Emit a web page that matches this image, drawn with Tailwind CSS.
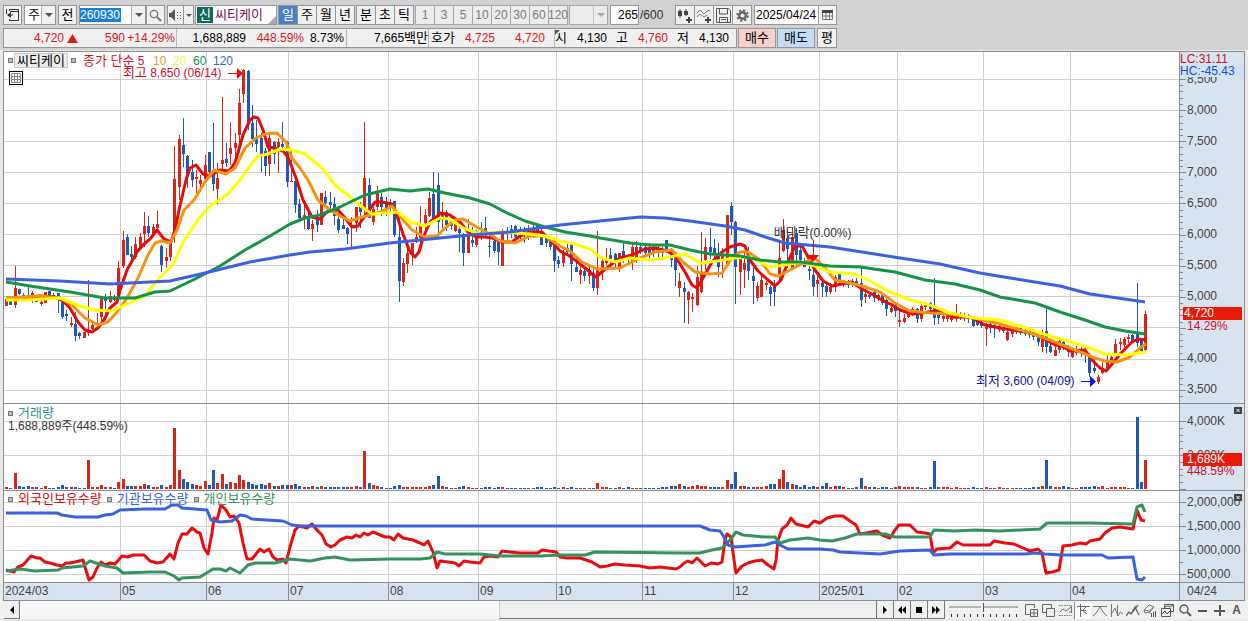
<!DOCTYPE html>
<html lang="ko">
<head>
  <meta charset="UTF-8" />
  <meta name="viewport" content="width=device-width, initial-scale=1.0" />
  <title>씨티케이 260930</title>
  <script src="https://cdn.jsdelivr.net/npm/@tailwindcss/browser@4"></script>
</head>
<body class="bg-[#e9e9e9] font-['Liberation_Sans','Noto_Sans_CJK_KR',sans-serif] text-[12px] leading-[14px] text-black">
  <div class="flex min-h-screen flex-col">

    <header class="bg-[#d1d1d1] px-[3px] pt-[5px] pb-[2px]">
      <!-- Toolbar -->
      <div class="flex h-5 items-stretch whitespace-nowrap">
        <button type="button" aria-label="패널" class="flex w-[19px] shrink-0 items-center justify-center border border-[#969696] bg-[#f0f0f0]">
          <svg class="h-[14px] w-[15px]" viewBox="0 0 15 14" fill="none" stroke="#333"><path d="M4.5 3V1.5h9v11h-9V11M5 3.5h9M1.5 1v5" /><path d="M2 7l4-3v6z" fill="#333" stroke="none" /><path d="M5 7h3" /></svg>
        </button>
        <div class="relative ml-[2px] w-8 shrink-0">
          <select aria-label="종목구분" class="h-5 w-full appearance-none border border-[#969696] bg-white pl-[3px] text-[13px]"><option>주</option></select>
          <div class="pointer-events-none absolute inset-y-px right-px flex w-[14px] items-center justify-center border-l border-[#b0b0b0] bg-[#f0f0f0]">
            <svg class="h-1 w-2" viewBox="0 0 8 4"><path d="M0 0h8L4 4z" fill="#555" /></svg>
          </div>
        </div>
        <button type="button" class="ml-[2px] w-[19px] shrink-0 border border-[#969696] bg-[#f0f0f0] text-[13px]">전</button>
        <div class="ml-[2px] flex w-[67px] shrink-0 items-center border border-[#969696] bg-white">
          <input type="text" aria-label="종목코드" value="260930" class="h-[14px] w-[41px] shrink-0 bg-[#1b7fd3] text-white outline-none" />
          <button type="button" aria-label="종목 목록" class="ml-auto flex h-full w-[14px] items-center justify-center border-l border-[#b0b0b0] bg-[#f0f0f0]">
            <svg class="h-1 w-2" viewBox="0 0 8 4"><path d="M0 0h8L4 4z" fill="#555" /></svg>
          </button>
        </div>
        <button type="button" aria-label="검색" class="flex w-[19px] shrink-0 items-center justify-center border border-[#969696] bg-[#f0f0f0]">
          <svg class="h-[13px] w-[13px]" viewBox="0 0 13 13" fill="none" stroke="#777"><circle cx="5" cy="5" r="3.7" stroke-width="1.3" /><path d="M8 8l4 4" stroke-width="2" /></svg>
        </button>
        <button type="button" aria-label="음성" class="ml-[2px] flex w-[17px] shrink-0 items-center justify-center border border-[#969696] bg-[#f0f0f0]">
          <svg class="h-3 w-[13px]" viewBox="0 0 13 12" fill="#555"><path d="M0 4h2l4-4v12L2 8H0z" /><path d="M8 3h1v1H8zM8 6h1v1H8zM8 9h1v1H8zM11 3h1v1h-1zM11 6h1v1h-1zM11 9h1v1h-1z" /></svg>
        </button>
        <button type="button" aria-label="음성 설정" class="flex w-[10px] shrink-0 items-center justify-center border border-l-0 border-[#969696] bg-[#f0f0f0]">
          <svg class="h-[3px] w-[6px]" viewBox="0 0 6 3"><path d="M0 0h6L3 3z" fill="#555" /></svg>
        </button>
        <div class="relative ml-px flex w-[82px] shrink-0 items-center border border-[#969696] bg-white text-[13px]">
          <span class="ml-px flex h-4 w-4 items-center justify-center bg-[#0c6b5c] text-white">신</span>
          <span class="ml-[2px] text-[#7a0a5a]">씨티케이</span>
          <svg class="absolute right-0 bottom-0 h-2 w-2" viewBox="0 0 8 8"><path d="M8 0v8H0z" fill="#aaa" /></svg>
        </div>
        <div class="ml-px flex shrink-0 border-y border-l border-[#969696] text-[13px]">
          <button type="button" class="w-[19px] border-r border-[#969696] bg-[#4a80cc] text-white">일</button>
          <button type="button" class="w-[19px] border-r border-[#969696] bg-[#f0f0f0]">주</button>
          <button type="button" class="w-[19px] border-r border-[#969696] bg-[#f0f0f0]">월</button>
          <button type="button" class="w-[19px] border-r border-[#969696] bg-[#f0f0f0]">년</button>
        </div>
        <div class="ml-px flex shrink-0 border-y border-l border-[#969696] text-[13px]">
          <button type="button" class="w-[19px] border-r border-[#969696] bg-[#f0f0f0]">분</button>
          <button type="button" class="w-[19px] border-r border-[#969696] bg-[#f0f0f0]">초</button>
          <button type="button" class="w-[19px] border-r border-[#969696] bg-[#f0f0f0]">틱</button>
        </div>
        <div class="ml-px flex shrink-0 border-y border-l border-[#a8a8a8] text-[#7c7c7c]">
          <button type="button" class="w-[19px] border-r border-[#a8a8a8] bg-[#ececec]">1</button>
          <button type="button" class="w-[19px] border-r border-[#a8a8a8] bg-[#ececec]">3</button>
          <button type="button" class="w-[19px] border-r border-[#a8a8a8] bg-[#ececec]">5</button>
          <button type="button" class="w-[19px] border-r border-[#a8a8a8] bg-[#ececec]">10</button>
          <button type="button" class="w-[19px] border-r border-[#a8a8a8] bg-[#ececec]">20</button>
          <button type="button" class="w-[19px] border-r border-[#a8a8a8] bg-[#ececec]">30</button>
          <button type="button" class="w-[19px] border-r border-[#a8a8a8] bg-[#ececec]">60</button>
          <button type="button" class="flex w-[19px] items-center justify-center border-r border-[#a8a8a8] bg-[#ececec]">120</button>
        </div>
        <div class="relative ml-px w-[39px] shrink-0">
          <select aria-label="분 주기" disabled class="h-5 w-full appearance-none border border-[#a8a8a8] bg-[#ececec]"><option></option></select>
          <div class="pointer-events-none absolute inset-y-px right-px flex w-[14px] items-center justify-center border-l border-[#c4c4c4]">
            <svg class="h-1 w-2" viewBox="0 0 8 4"><path d="M0 0h8L4 4z" fill="#aaa" /></svg>
          </div>
        </div>
        <input type="text" id="bar-count" value="265" class="ml-[2px] w-[29px] shrink-0 border border-[#969696] bg-white text-right outline-none" />
        <label for="bar-count" class="ml-px w-[35px] shrink-0 self-center text-[#333]">/600</label>
        <div class="flex shrink-0 border-y border-l border-[#969696]">
          <button type="button" aria-label="차트 유형" class="flex w-[19px] items-center justify-center border-r border-[#969696] bg-[#f0f0f0]">
            <svg class="h-[15px] w-4" viewBox="0 0 16 15" fill="#444"><path d="M1 3h4v5H1zM2.5 1h1v9h-1zM7 3h4v4H7zM8.500 1h1v7h-1zM11 9h2v2h2v2h-2v2h-2v-2H9v-2h2z" /></svg>
          </button>
          <button type="button" aria-label="지표 추가" class="flex w-[19px] items-center justify-center border-r border-[#969696] bg-[#f0f0f0]">
            <svg class="h-[15px] w-4" viewBox="0 0 16 15" fill="none" stroke="#777"><path d="M1 5l3-3 4 4 3-3 3-1M1 9l3-3 4 3 3-2" /><path d="M11 9h2v2h2v2h-2v2h-2v-2H9v-2h2z" fill="#444" stroke="none" /></svg>
          </button>
          <button type="button" aria-label="저장" class="flex w-[19px] items-center justify-center border-r border-[#969696] bg-[#f0f0f0]">
            <svg class="h-[15px] w-[15px]" viewBox="0 0 15 15" fill="none" stroke="#555"><path d="M.5.5h12l2 2v12H.5zM3.5 1v5h8V1M3.500 14V9.500h8V14M5 11.500h5" /></svg>
          </button>
          <button type="button" aria-label="설정" class="flex w-[19px] items-center justify-center border-r border-[#969696] bg-[#f0f0f0]">
            <svg class="h-[13px] w-[13px]" viewBox="0 0 13 13" fill="none" stroke="#666"><circle cx="6.5" cy="6.5" r="3.3" stroke-width="2.4" /><circle cx="6.5" cy="6.5" r="5.3" stroke-width="2" stroke-dasharray="2.1 2.06" /></svg>
          </button>
        </div>
        <input type="text" aria-label="기준일" value="2025/04/24" class="ml-[2px] w-[65px] shrink-0 border border-[#969696] bg-white pl-px outline-none" />
        <button type="button" aria-label="달력" class="flex w-[18px] shrink-0 items-center justify-center border border-l-0 border-[#969696] bg-[#f4f4f4]">
          <svg class="h-[10px] w-[11px]" viewBox="0 0 11 10" fill="none" stroke="#777"><path d="M.5.5h10v9H.5zM4 3v7M7.5 3v7M1 6h10" /><path d="M0 0h11v3H0z" fill="#444" stroke="none" /></svg>
        </button>
      </div>

      <!-- Quote line -->
      <div class="mt-[3px] flex h-5 items-stretch whitespace-nowrap">
        <div class="flex h-5 w-[734px] shrink-0 border border-[#969696] bg-[#f0f0f0]">
          <div class="flex w-[173px] items-center border-r border-[#b8b8b8] text-[#d0221c]">
            <span class="w-[60px] text-right">4,720</span>
            <svg class="ml-[3px] h-[10px] w-[11px]" viewBox="0 0 11 10"><path d="M5.5 1L11 10H0z" fill="#d9200f" /></svg>
            <span class="w-[47px] text-right">590</span>
            <span class="w-[50px] text-right">+14.29%</span>
          </div>
          <div class="flex w-[170px] items-center border-r border-[#b8b8b8]">
            <span class="w-[69px] text-right">1,688,889</span>
            <span class="w-[58px] text-right text-[#d0221c]">448.59%</span>
            <span class="w-[40px] text-right">8.73%</span>
          </div>
          <div class="flex w-[82px] items-center justify-end border-r border-[#b8b8b8]">7,665<span class="text-[13px]">백만</span></div>
          <div class="flex w-[126px] items-center border-r border-[#b8b8b8]">
            <span class="ml-[2px] w-[24px] text-[13px]">호가</span>
            <span class="w-[40px] text-right text-[#d0221c]">4,725</span>
            <span class="w-[50px] text-right text-[#d0221c]">4,720</span>
          </div>
          <div class="relative flex items-center">
            <svg class="absolute top-px left-0 h-[5px] w-[5px]" viewBox="0 0 5 5"><path d="M0 0h5L0 5z" fill="#555" /></svg>
            <span class="w-[12px] text-[13px]">시</span>
            <span class="w-[40px] text-right">4,130</span>
            <span class="ml-[9px] w-[12px] text-[13px]">고</span>
            <span class="w-[40px] text-right text-[#d0221c]">4,760</span>
            <span class="ml-[9px] w-[12px] text-[13px]">저</span>
            <span class="w-[40px] text-right">4,130</span>
          </div>
        </div>
        <button type="button" class="ml-px w-[38px] shrink-0 border border-[#969696] bg-[#f8cfcb] text-[13px]">매수</button>
        <button type="button" class="ml-px w-[38px] shrink-0 border border-[#969696] bg-[#c3dcf6] text-[13px]">매도</button>
        <button type="button" class="ml-[2px] w-5 shrink-0 border border-[#969696] bg-[#f0f0f0] text-[13px]">평</button>
      </div>
    </header>

    <!-- Chart -->
    <main class="mx-[3px] mt-px border border-b-0 border-[#8c8c8c] bg-white">

      <!-- Price pane -->
      <section class="flex h-[352px] border-b border-[#8c8c8c]">
        <div class="relative min-w-0 flex-1 overflow-hidden">
          <svg class="absolute inset-0 h-full w-full" viewBox="4 52 1175 351" preserveAspectRatio="none" fill="none">
            <path stroke="#cfcfcf" d="M4 79.5H1179M4 110.5H1179M4 141.5H1179M4 172.5H1179M4 203.5H1179M4 234.5H1179M4 265.5H1179M4 296.5H1179M4 327.5H1179M4 359.5H1179M4 390.5H1179" />
            <path class="months" stroke="#cfcfcf" />
            <g id="candles" shape-rendering="crispEdges"></g>
            <g stroke-width="3" stroke-linejoin="round">
              <polyline stroke="#e30b0b" points="6,298 20,298 40,296 55,297 63,301 70,308 78,322 85,330 92,332 98,328 104,320 110,308 117,302 120,290 127,270 137,252 143,245 150,239 157,230 164,239 171,242 175,230 179,210 186,180 190,168 196,165 203,174 210,176 220,170 229,171 235,163 243,135 250,120 254,117 258,118 263,130 268,147 275,148 283,151 288,157 296,178 303,200 312,217 320,219 328,211 338,210 345,218 352,227 358,226 367,213 375,202 382,202 392,204 396,213 403,234 410,252 415,257 419,252 423,238 430,222 441,213 450,215 460,222 468,232 476,237 485,237 492,238 501,242 512,242 520,236 530,232 542,232 550,240 560,251 568,255 575,260 585,268 596,277 603,271 612,264 620,258 632,255 645,249 655,248 667,251 675,256 685,272 692,285 697,288 703,278 712,262 722,252 730,247 740,244 745,246 750,260 758,271 768,280 775,286 781,280 788,262 795,246 802,246 807,255 815,270 823,281 832,286 842,284 852,282 862,289 870,293 882,300 892,305 900,310 912,314 922,313 940,310 952,317 970,317 985,325 1000,328 1020,331 1035,334 1046,340 1055,345 1062,346 1070,351 1085,350 1092,360 1100,368 1106,371 1112,364 1122,352 1132,342 1138,339 1146,340" />
              <polyline stroke="#f5930f" points="6,298 40,296 60,298 72,305 85,318 98,325 108,322 117,312 127,298 138,278 148,255 155,243 161,241 170,243 177,230 184,210 194,200 205,182 214,170 226,174 235,168 245,148 256,138 265,134 277,133 286,142 292,158 300,168 308,180 318,200 330,210 340,216 350,221 362,217 375,214 385,210 392,206 397,212 405,222 412,230 425,237 437,236 445,228 455,220 463,219 475,226 490,234 500,241 515,243 530,236 545,236 560,246 570,251 582,262 597,269 620,268 640,258 655,252 672,250 683,262 695,272 710,274 722,273 732,258 740,252 748,252 760,260 770,274 778,276 790,270 805,262 815,258 825,268 835,280 855,284 862,286 880,292 895,303 910,311 930,313 950,314 975,318 1000,324 1030,333 1050,340 1065,346 1080,352 1095,358 1105,361 1117,362 1130,357 1140,348 1146,344" />
              <polyline stroke="#ffff00" points="6,300 30,300 60,298 80,306 95,310 112,311 125,305 145,296 160,277 173,265 183,242 200,217 210,206 228,194 240,180 252,163 258,156 268,154 280,149 292,150 305,154 322,168 335,185 350,197 362,207 372,214 385,213 398,212 410,222 425,226 440,218 450,219 463,228 480,234 500,232 530,234 545,236 560,241 575,244 590,249 600,257 615,262 630,258 650,260 670,257 685,254 700,263 718,261 735,258 750,257 770,267 785,265 800,262 815,266 830,272 855,274 870,281 890,292 910,300 930,305 950,313 975,318 1000,320 1020,326 1050,336 1075,343 1090,348 1105,354 1125,355 1146,352" />
              <polyline stroke="#159447" points="6,282 30,286 70,292 105,298 135,298 155,292 170,291 195,279 220,266 245,250 270,236 290,224 305,218 320,215 340,207 365,195 390,189 410,191 428,189 445,193 470,198 490,204 505,212 525,221 545,227 565,232 590,236 600,238 630,243 650,245 670,245 690,250 710,254 740,256 760,260 780,262 800,262 830,266 860,267 895,272 925,280 955,284 980,290 1000,297 1035,303 1060,312 1085,320 1105,327 1125,331 1145,334" />
              <polyline stroke="#3a62e0" points="6,279 60,281 110,284 170,281 205,273 250,262 290,255 310,252 345,249 390,243 430,239 470,235 510,232 560,225 600,221 640,217 665,218 690,221 725,226 745,230 765,237 785,243 830,247 862,252 900,258 940,264 980,273 1010,278 1060,286 1090,294 1145,302" />
            </g>
            <path d="M813.5 240V257" stroke="#b01a1a" />
            <path d="M807 255h12l-6 7z" fill="#e80c0c" />
          </svg>
          <div class="relative flex h-[16px] items-center pl-1 pt-px whitespace-nowrap">
            <span class="h-[5px] w-[5px] border border-[#777] bg-[#bbb]"></span>
            <button type="button" class="ml-px flex h-[15px] w-[54px] items-center justify-center border border-[#c8c8c8] bg-[#ececec] text-[13px] leading-[13px]">씨티케이</button>
            <span class="ml-[3px] h-[5px] w-[5px] border border-[#777] bg-[#bbb]"></span>
            <span class="ml-[7px] w-[70px] text-[#d01020]"><span class="text-[13px]">종가 단순</span> 5</span>
            <span class="w-5 text-[#d9a21b]">10</span>
            <span class="w-5 text-[#f5f03a]">20</span>
            <span class="w-5 text-[#159447]">60</span>
            <span class="text-[#3a62c8]">120</span>
          </div>
          <button type="button" aria-label="데이터 표" class="absolute top-[19px] left-[5px] flex h-[14px] w-[14px] items-center justify-center border border-black bg-white">
            <svg class="h-[10px] w-[10px]" viewBox="0 0 10 10" fill="none" stroke="#888"><path d="M.5.5h9v9h-9zM3.5 0v10M6.5 0v10M0 3.5h10M0 6.5h10" /></svg>
          </button>
          <div class="absolute top-[14px] right-[79.7%] flex items-center gap-[6px] whitespace-nowrap text-[#c8102e]">
            <span><span class="text-[13px]">최고</span> 8,650 (06/14)</span>
            <svg class="h-[13px] w-[15px]" viewBox="0 0 15 13"><path d="M0 6h9V1l6 5.5L9 12V7H0z" fill="#e80c0c" /></svg>
          </div>
          <div class="absolute top-[174px] left-[65.5%] whitespace-nowrap text-[#333]"><span class="text-[13px]">배당락</span>(0.00%)</div>
          <div class="absolute top-[322px] right-[7.1%] flex items-center gap-[6px] whitespace-nowrap text-[#10109a]">
            <span><span class="text-[13px]">최저</span> 3,600 (04/09)</span>
            <svg class="h-[13px] w-[15px]" viewBox="0 0 15 13"><path d="M0 6h9V1l6 5.5L9 12V7H0z" fill="#0c0ce8" /></svg>
          </div>
        </div>
        <div class="relative w-[65px] shrink-0 overflow-hidden border-l border-[#8c8c8c] bg-[#d8e3f0] text-[#444]">
          <svg class="absolute inset-0 h-[351px] w-2" viewBox="0 52 8 351" fill="none" stroke="#888"><path id="price-ticks" /></svg>
          <ul class="pt-[12px] pl-[7px] leading-[31px]">
            <li class="h-[31px]">8,500</li>
            <li class="h-[31px]">8,000</li>
            <li class="h-[31px]">7,500</li>
            <li class="h-[31px]">7,000</li>
            <li class="h-[31px]">6,500</li>
            <li class="h-[31px]">6,000</li>
            <li class="h-[31px]">5,500</li>
            <li class="h-[31px]">5,000</li>
            <li class="h-[31px]"></li>
            <li class="h-[31px]">4,000</li>
            <li class="h-[31px]">3,500</li>
          </ul>
          <div class="absolute inset-x-0 top-px bg-[#d8e3f0] leading-[12px]">
            <p class="text-[#c8102e]">LC:31.11</p>
            <p class="bg-[#cfe2fa] text-[#1f4fb0]">HC:-45.43</p>
          </div>
          <div class="absolute top-[255px] right-[2px] left-[3px] h-[13px] bg-[#e81a08] pl-px leading-[13px] text-white">4,720</div>
          <div class="absolute top-[268px] left-[7px] leading-[13px] text-[#c8102e]">14.29%</div>
        </div>
      </section>

      <!-- Volume pane -->
      <section class="flex h-[87px] border-b border-[#8c8c8c]">
        <div class="relative min-w-0 flex-1 overflow-hidden">
          <svg class="absolute inset-0 h-full w-full" viewBox="4 404 1175 86" preserveAspectRatio="none" fill="none">
            <path stroke="#cfcfcf" d="M4 421.5H1179M4 455.5H1179" />
            <path class="months" stroke="#cfcfcf" />
            <g id="volumes" shape-rendering="crispEdges"></g>
          </svg>
          <div class="relative flex items-center pt-[2px] pl-1 text-[13px] text-[#2f9095]">
            <span class="mr-[5px] h-[5px] w-[5px] border border-[#777] bg-[#bbb]"></span>거래량
          </div>
          <p class="relative pl-1 leading-[12px] text-[#333]">1,688,889주(448.59%)</p>
        </div>
        <div class="relative w-[65px] shrink-0 overflow-hidden border-l border-[#8c8c8c] bg-[#d8e3f0] text-[#444]">
          <svg class="absolute inset-0 h-[86px] w-2" viewBox="0 404 8 86" fill="none" stroke="#888"><path id="volume-ticks" /></svg>
          <ul class="pl-[7px] leading-[34px]">
            <li class="h-[34px]">4,000K</li>
            <li class="h-[34px]">2,000K</li>
          </ul>
          <div class="absolute top-[49px] right-[2px] left-[3px] h-[13px] bg-[#e81a08] pl-1 leading-[13px] text-white">1,689K</div>
          <div class="absolute top-[61px] left-[7px] leading-[13px] text-[#c8102e]">448.59%</div>
          <button type="button" aria-label="닫기" class="absolute top-[3px] right-[2px] h-[7px] w-2 bg-[#444]">
            <svg class="h-[7px] w-2" viewBox="0 0 8 7" stroke="#fff"><path d="M2.5 2l3 3M5.5 2l-3 3" /></svg>
          </button>
        </div>
      </section>

      <!-- Holdings pane -->
      <section class="flex h-[92px] border-b border-[#8c8c8c]">
        <div class="relative min-w-0 flex-1 overflow-hidden">
          <svg class="absolute inset-0 h-full w-full" viewBox="4 491 1175 91" preserveAspectRatio="none" fill="none">
            <path stroke="#cfcfcf" d="M4 502.5H1179M4 526.5H1179M4 550.5H1179M4 574.5H1179" />
            <path class="months" stroke="#cfcfcf" />
            <g stroke-width="3" stroke-linejoin="round">
              <polyline stroke="#e80c0c" points="6,570 14,572 18,567 23,565 31,556 37,558 40,558 45,562 50,563 57,565 62,566 66,563 70,563 75,562 83,560 85,567 89,580 93,577 97,568 101,562 105,565 110,563 115,564 122,556 128,557 133,555 144,555 150,561 157,563 163,562 170,554 174,559 178,543 182,534 187,534 192,528 197,532 200,533 204,548 208,554 212,533 214,518 217,520 221,505 226,510 230,517 234,516 239,523 243,543 247,559 252,559 260,549 264,552 269,549 273,557 277,560 283,559 286,563 290,547 295,530 299,526 307,528 312,524 317,530 322,535 326,544 331,547 335,545 340,540 347,537 352,538 356,535 360,537 364,533 368,535 373,532 378,534 385,537 390,537 394,540 398,534 403,538 413,540 420,543 424,545 428,541 433,552 437,568 440,561 448,562 455,563 459,566 464,561 470,562 480,563 484,557 490,556 498,557 502,551 510,552 520,553 538,553 542,550 556,552 560,557 567,558 580,558 592,562 600,567 607,566 615,564 625,565 640,566 650,568 660,567 676,569 680,567 684,563 688,561 692,563 697,558 705,566 711,563 718,564 722,562 725,540 727,534 731,537 734,560 736,573 742,566 748,563 755,561 762,560 768,565 774,569 776,560 778,540 782,529 787,525 791,518 796,524 808,527 814,521 820,523 827,518 835,516 843,516 850,521 856,525 860,534 866,533 877,531 882,535 890,538 895,530 899,525 910,525 917,532 925,533 930,534 933,553 937,549 950,548 957,542 963,545 985,545 990,545 994,541 1005,543 1014,544 1023,548 1030,551 1038,549 1042,553 1046,573 1052,572 1059,570 1063,546 1072,545 1080,543 1086,544 1090,541 1100,539 1105,533 1112,528 1120,527 1133,529 1137,510 1141,520 1145,521" />
              <polyline stroke="#35925f" points="6,571 20,569 35,571 58,570 62,568 83,566 90,561 105,566 117,568 123,573 150,572 165,572 174,576 179,580 182,578 200,577 213,569 220,569 226,571 230,568 240,573 248,565 255,563 275,563 290,559 310,561 325,558 335,557 350,560 390,559 420,559 430,558 437,552 445,554 480,554 500,556 540,556 560,555 585,555 595,552 680,553 700,553 712,550 722,548 730,540 736,532 743,535 765,537 775,537 780,543 790,540 808,538 820,540 832,541 845,538 857,534 885,534 895,537 910,537 930,537 934,530 955,531 975,530 1000,531 1040,529 1047,523 1090,523 1133,524 1137,507 1142,505 1145,512" />
              <polyline stroke="#3a62e0" points="6,513 57,513 62,515 75,517 98,517 105,515 113,514 120,510 145,509 165,509 172,505 178,505 182,508 207,510 211,520 220,522 232,521 240,515 246,516 252,519 283,521 292,525 300,526 355,526 400,526 700,526 710,530 720,531 724,537 728,545 735,547 765,545 775,542 780,545 788,549 820,549 833,550 840,552 880,554 900,551 930,550 934,555 950,554 1025,554 1035,553 1045,554 1060,555 1102,555 1108,558 1133,557 1137,579 1142,580 1145,577" />
            </g>
          </svg>
          <div class="relative flex items-center pt-px pl-1 text-[13px] whitespace-nowrap">
            <span class="mr-[5px] h-[5px] w-[5px] border border-[#777] bg-[#bbb]"></span>
            <span class="mr-[5px] text-[#d01020]">외국인보유수량</span>
            <span class="mr-[5px] h-[5px] w-[5px] border border-[#777] bg-[#bbb]"></span>
            <span class="mr-[5px] text-[#3a62e0]">기관보유수량</span>
            <span class="mr-[5px] h-[5px] w-[5px] border border-[#777] bg-[#bbb]"></span>
            <span class="text-[#35925f]">개인보유수량</span>
          </div>
        </div>
        <div class="relative w-[65px] shrink-0 overflow-hidden border-l border-[#8c8c8c] bg-[#d8e3f0] text-[#444]">
          <svg class="absolute inset-0 h-[91px] w-2" viewBox="0 491 8 91" fill="none" stroke="#888"><path id="holding-ticks" /></svg>
          <ul class="pl-[7px] leading-[22px]">
            <li class="h-6">2,000,000</li>
            <li class="h-6">1,500,000</li>
            <li class="h-6">1,000,000</li>
            <li class="h-[19px]">500,000</li>
          </ul>
          <button type="button" aria-label="닫기" class="absolute top-[3px] right-[2px] h-[7px] w-2 bg-[#444]">
            <svg class="h-[7px] w-2" viewBox="0 0 8 7" stroke="#fff"><path d="M2.5 2l3 3M5.5 2l-3 3" /></svg>
          </button>
        </div>
      </section>

      <!-- Time axis -->
      <div class="flex h-[18px] border-b border-[#8c8c8c] bg-[#d8e3f0] leading-[16px] whitespace-nowrap text-[#444]">
        <div class="grid min-w-0 flex-1 grid-cols-[117fr_86fr_82fr_100fr_90fr_78fr_86fr_91fr_86fr_78fr_86fr_87fr_108fr]">
          <span class="border-r border-[#8c8c8c] pl-px">2024/03</span>
          <span class="border-r border-[#8c8c8c] pl-px">05</span>
          <span class="border-r border-[#8c8c8c] pl-px">06</span>
          <span class="border-r border-[#8c8c8c] pl-px">07</span>
          <span class="border-r border-[#8c8c8c] pl-px">08</span>
          <span class="border-r border-[#8c8c8c] pl-px">09</span>
          <span class="border-r border-[#8c8c8c] pl-px">10</span>
          <span class="border-r border-[#8c8c8c] pl-px">11</span>
          <span class="border-r border-[#8c8c8c] pl-px">12</span>
          <span class="border-r border-[#8c8c8c] pl-px">2025/01</span>
          <span class="border-r border-[#8c8c8c] pl-px">02</span>
          <span class="border-r border-[#8c8c8c] pl-px">03</span>
          <span class="pl-px">04</span>
        </div>
        <span class="w-[65px] shrink-0 border-l border-[#8c8c8c] pl-[7px]">04/24</span>
      </div>
    </main>

    <!-- Scroll bar and chart tools -->
    <footer class="flex h-[18px] items-stretch bg-[#f0f0f0] pl-1">
      <button type="button" aria-label="이전" class="flex w-4 shrink-0 items-center justify-center border-r border-b border-[#777] bg-[#f0f0f0]">
        <svg class="h-2 w-1" viewBox="0 0 4 8"><path d="M4 0v8L0 4z" /></svg>
      </button>
      <div class="flex min-w-0 flex-1 justify-end bg-[#f8f8f8]">
        <div class="w-[44.1%] border-r border-b border-l border-[#777] border-l-[#ccc] bg-[#efefef]"></div>
      </div>
      <button type="button" aria-label="다음" class="flex w-[17px] shrink-0 items-center justify-center border-r border-b border-[#777]"><svg class="h-2 w-1" viewBox="0 0 4 8"><path d="M0 0v8l4-4z" /></svg></button>
      <button type="button" aria-label="뒤로" class="flex w-[17px] shrink-0 items-center justify-center border-r border-b border-[#777]"><svg class="h-2 w-2" viewBox="0 0 8 8"><path d="M4 0v8L0 4zM8 0v8L4 4z" /></svg></button>
      <button type="button" aria-label="정지" class="flex w-[17px] shrink-0 items-center justify-center border-r border-b border-[#777]"><svg class="h-[6px] w-[6px]" viewBox="0 0 6 6"><path d="M0 0h6v6H0z" /></svg></button>
      <button type="button" aria-label="앞으로" class="flex w-[17px] shrink-0 items-center justify-center border-r border-b border-[#777]"><svg class="h-2 w-2" viewBox="0 0 8 8"><path d="M0 0v8l4-4zM4 0v8l4-4z" /></svg></button>
      <div class="ml-[4px] flex w-[69px] shrink-0 flex-col">
        <input type="range" aria-label="확대" min="0" max="100" value="48" class="mt-px h-[10px] w-full appearance-none bg-linear-to-b from-transparent from-40% via-[#777] via-50% to-transparent to-60% [&::-webkit-slider-thumb]:h-[9px] [&::-webkit-slider-thumb]:w-[3px] [&::-webkit-slider-thumb]:appearance-none [&::-webkit-slider-thumb]:border-r [&::-webkit-slider-thumb]:border-[#555] [&::-webkit-slider-thumb]:bg-[#eee]" />
        <svg class="mt-[2px] h-[3px] w-full" viewBox="0 0 69 3" fill="none" stroke="#333"><path d="M2.5 0v3M8.5 0v3M15.5 0v3M21.5 0v3M28.5 0v3M34.5 0v3M41.5 0v3M47.5 0v3M54.5 0v3M60.5 0v3M67.5 0v3" /></svg>
      </div>
      <div class="mr-[3px] ml-[5px] flex w-[222px] shrink-0 items-center">
        <button type="button" aria-label="새 창" class="flex w-[17px] justify-center"><svg class="h-[13px] w-[13px]" viewBox="0 0 13 13" fill="none" stroke="#666"><path d="M5 10.5H.5v-10h9V4M5.5 5.5h7v7h-7zM9 6v6M6 9h6" /></svg></button>
        <button type="button" aria-label="창 복제" class="flex w-[17px] justify-center"><svg class="h-[13px] w-[13px]" viewBox="0 0 13 13" fill="none" stroke="#666"><path d="M4 8.5H.5v-8h9V4M4.5 4.5h8v8h-8z" /></svg></button>
        <button type="button" aria-label="영역" class="flex w-[17px] justify-center"><svg class="h-3 w-[13px]" viewBox="0 0 13 12" fill="none" stroke="#777"><path d="M0 1.5h13M0 11.5h13" stroke-dasharray="1.5 1" /><path d="M1 8l3-3 3 2 5-4M12.5 2v7M10 8h3" /></svg></button>
        <button type="button" aria-label="십자선" class="flex h-[17px] w-[17px] items-center justify-center border-l border-[#888] bg-white"><svg class="h-[13px] w-[13px]" viewBox="0 0 13 13" fill="none" stroke="#666"><path d="M0 2.5h13M3.5 0v13M5 7l4-4M5 6l5 4M4 6.5h5" /></svg></button>
        <button type="button" aria-label="고저선" class="flex w-[17px] justify-center"><svg class="h-[13px] w-[14px]" viewBox="0 0 14 13" fill="none" stroke="#777"><path d="M0 2.5h14M0 12l3-3 4-6 3 5 4 4" /></svg></button>
        <button type="button" aria-label="파동" class="flex w-[16px] justify-center"><svg class="h-[13px] w-[13px]" viewBox="0 0 13 13" fill="none" stroke="#777"><path d="M1.5 0v13M2 9l3-5 3 8 2-4 3 2M7.5 1v11" /></svg></button>
        <button type="button" aria-label="추세선" class="flex w-[17px] justify-center"><svg class="h-[13px] w-[14px]" viewBox="0 0 14 13" fill="none" stroke="#666"><path d="M0 12l3-4 2 2 7-9M5 10l4-7 4 8" stroke-width="1.3" /></svg></button>
        <button type="button" aria-label="지우개" class="flex w-[18px] justify-center"><svg class="h-[13px] w-[14px]" viewBox="0 0 14 13" fill="none" stroke="#777"><path d="M1 6l5-5 5 2-4 5-5 1zM1 6l5 1 5-4M7 7v3" /><path d="M8.5 9v4M10.5 8v5M12.5 7v6" stroke="#555" /></svg></button>
        <button type="button" aria-label="차트 복사" class="flex w-[17px] justify-center"><svg class="h-[13px] w-[13px]" viewBox="0 0 13 13" fill="none" stroke="#555"><path d="M3.5 4V.5h9v7H10M.5 4.5h9v8h-9zM1 10l3-3 2 3 3-3M4 3l3-1 2 1 3-2" /></svg></button>
        <button type="button" aria-label="돋보기" class="flex w-[18px] justify-center"><svg class="h-[13px] w-[13px]" viewBox="0 0 13 13" fill="none" stroke="#555"><circle cx="5" cy="5" r="4" stroke-width="1.3" /><path d="M8 8l4 4" stroke-width="2" /></svg></button>
        <button type="button" aria-label="축소" class="flex w-[17px] justify-center"><svg class="h-[11px] w-[11px]" viewBox="0 0 11 11"><path d="M1 5h9v2H1z" fill="#555" /></svg></button>
        <button type="button" aria-label="확대" class="flex w-[17px] justify-center"><svg class="h-[11px] w-[11px]" viewBox="0 0 11 11"><path d="M0 5h5V0h2v5h4v2H7v4H5V7H0z" fill="#555" /></svg></button>
        <button type="button" class="flex w-[17px] justify-center font-bold text-[#555]">A</button>
      </div>
    </footer>
  </div>

  <script>
    const UP = "#d6261a";
    const DOWN = "#1f59b5";
    const FIRST_X = 6;
    const STEP = 4.316;

    // direction, high, low, body top, body bottom
    const candles = `
r 299 306 299 306|b 298 305 298 305|r 266 308 288 305|b 289 295 289 294|b 293 299 295 297|b 286 301 296 297|r 291 303 293 298|b 296 302 296 302|r 300 306 302 304|r 292 303 292 303
b 291 300 291 296|b 293 299 295 296|b 293 313 293 297|b 298 319 298 317|b 310 321 314 316|r 317 327 323 325|b 312 341 324 336|b 332 339 333 336|r 332 338 332 338|r 280 336 330 333
r 323 331 325 329|r 313 328 323 325|r 298 323 298 317|b 294 320 299 301|r 291 303 296 302|b 295 301 297 300|r 261 300 268 298|r 231 268 240 266|b 234 255 237 255|b 246 259 254 257
r 237 259 244 257|r 233 250 237 247|r 212 247 226 234|b 216 237 226 233|r 224 236 227 235|r 211 230 224 228|b 245 272 246 265|r 248 268 257 261|r 240 261 242 257|r 146 243 179 233
r 135 200 139 187|b 118 167 145 154|b 155 188 156 174|b 160 187 172 180|r 170 193 177 179|r 175 192 180 184|r 155 183 165 179|b 152 177 152 172|b 123 191 172 184|r 163 204 178 189
r 97 170 160 164|b 143 167 159 163|r 122 165 148 154|r 133 168 143 148|r 89 144 103 135|r 69 103 70 94|b 70 130 71 123|b 105 147 123 139|b 120 152 137 144|b 133 172 138 157
b 148 176 151 166|r 132 176 138 164|b 141 164 142 154|r 138 173 142 147|b 122 150 144 147|b 141 187 142 182|r 150 182 181 182|b 181 213 181 205|b 199 220 204 218|r 205 229 215 217
b 210 230 216 229|r 220 241 224 229|b 210 232 219 225|r 193 225 193 225|b 191 205 197 203|b 192 211 202 205|b 197 225 204 216|b 213 233 219 230|b 216 229 225 229|b 227 244 228 234
r 217 247 226 227|r 207 232 207 223|b 202 228 207 212|r 122 217 178 210|b 178 218 185 218|r 207 225 209 222|r 186 210 191 207|b 193 216 197 207|b 197 216 202 208|b 199 214 204 207
b 201 237 201 235|b 218 302 237 281|r 258 286 263 282|r 243 273 253 264|r 243 265 243 255|r 227 243 237 242|r 206 243 224 238|r 209 232 215 223|r 192 217 198 216|b 172 223 194 219
b 173 237 185 222|r 202 228 213 220|b 210 231 212 225|b 215 230 217 226|r 217 232 222 231|b 218 252 229 233|b 233 266 234 253|r 219 253 235 253|b 227 247 240 243|r 230 247 231 245
b 222 240 232 236|b 217 238 228 231|b 235 257 246 247|b 240 253 241 251|b 241 265 242 252|r 229 266 232 266|b 227 243 231 233|b 225 238 229 234|b 225 241 226 237|b 227 240 229 231
b 227 243 230 233|r 225 240 230 237|b 225 238 228 233|b 224 237 225 233|b 227 245 232 245|b 235 247 237 243|b 238 250 240 247|b 240 272 241 261|b 256 268 260 264|r 250 267 253 263
b 243 254 248 252|b 243 281 243 264|b 257 272 267 272|r 263 284 270 275|b 269 281 271 276|r 265 284 270 276|b 267 291 273 288|r 231 295 268 288|r 258 280 261 272|r 248 265 258 263
b 248 263 255 259|b 253 268 254 263|r 253 272 253 269|b 242 263 251 260|b 255 263 257 260|r 243 270 247 262|r 241 263 247 258|b 243 254 247 252|b 243 257 247 253|b 243 258 248 255
b 244 257 247 254|b 245 257 248 253|b 247 260 249 253|b 240 252 240 250|b 248 267 251 260|b 255 286 257 270|r 273 297 281 288|b 282 323 288 292|r 291 324 292 300|r 293 312 297 299
r 266 306 277 305|r 232 293 272 292|r 238 270 247 260|b 228 259 247 252|b 239 262 248 255|b 243 277 253 267|r 248 278 255 260|r 215 266 215 265|b 202 235 206 222|b 221 304 222 267
r 255 295 257 272|r 252 288 263 270|b 247 280 258 271|b 267 304 276 281|r 282 301 286 298|r 276 297 280 297|r 281 290 283 285|b 285 306 287 294|b 280 306 287 292|r 240 280 258 277
r 219 252 230 251|b 230 268 238 249|r 227 269 237 268|b 228 267 233 255|b 247 263 250 260|b 258 267 264 267|b 265 280 269 271|b 267 296 275 287|r 275 297 280 284|b 281 297 283 287
b 283 297 286 292|r 283 294 287 292|r 275 292 277 287|b 272 283 272 282|r 280 287 282 285|b 280 288 282 285|r 279 287 281 284|b 278 287 281 285|b 267 307 283 300|r 285 303 294 297
b 292 299 295 297|b 291 302 292 298|r 294 301 295 299|b 294 305 295 303|b 298 316 300 309|r 303 313 308 312|b 303 317 305 311|r 310 327 320 322|r 314 323 318 322|r 309 318 312 317
r 307 316 309 313|b 308 323 309 319|r 304 322 306 319|r 302 310 303 307|b 302 313 303 309|b 278 325 306 318|b 308 324 311 318|r 310 322 316 319|r 312 322 315 319|r 314 322 316 320
r 304 322 313 319|r 312 320 314 318|b 313 321 315 318|b 314 323 316 319|b 319 327 320 326|b 319 326 321 325|b 320 328 322 326|r 323 346 327 329|b 322 333 324 328|b 323 338 325 328
r 325 332 326 330|b 326 333 327 331|r 330 341 332 340|r 328 337 330 334|b 327 334 329 332|b 326 335 328 333|b 328 336 330 334|b 329 338 331 335|b 330 340 333 337|b 334 346 336 342
r 330 352 333 347|b 307 353 331 347|b 343 353 346 352|r 343 356 350 356|r 338 353 341 350|b 340 350 342 348|b 345 357 347 352|r 348 358 352 357|r 346 355 349 353|b 346 357 349 353
b 348 363 350 355|b 353 377 355 373|b 357 373 368 371|r 375 384 377 382|r 362 374 368 373|r 354 371 362 368|r 353 363 357 363|r 339 356 344 355|r 338 350 342 344|r 337 347 339 345
r 334 343 337 339|b 334 342 335 341|b 283 347 332 343|b 338 354 339 351|r 311 351 314 350`
      .trim()
      .split(/[|\n]/)
      .map((row) => {
        const [dir, ...values] = row.split(" ");
        return [dir === "r" ? UP : DOWN, ...values.map(Number)];
      });

    // bar heights
    const volumes = [
      2, 1, 16, 3, 2, 3, 2, 2, 1, 3, 1, 1, 2, 4, 2, 2, 2, 1, 1, 29, 2, 2, 4, 2, 2, 1, 7, 10, 3, 3,
      3, 3, 5, 4, 2, 2, 4, 2, 4, 61, 19, 10, 7, 5, 4, 3, 8, 4, 19, 6, 15, 5, 7, 6, 14, 9, 7, 5, 4, 5,
      4, 6, 3, 3, 4, 4, 4, 5, 3, 2, 2, 3, 2, 3, 2, 2, 2, 2, 2, 2, 2, 3, 2, 38, 6, 4, 3, 2, 1, 1,
      3, 4, 2, 2, 2, 2, 2, 2, 3, 4, 13, 3, 2, 1, 1, 2, 3, 2, 1, 1, 1, 2, 2, 1, 2, 2, 1, 1, 1, 1,
      1, 1, 1, 2, 2, 1, 1, 2, 1, 2, 1, 2, 1, 1, 1, 1, 1, 6, 2, 2, 1, 1, 2, 1, 2, 1, 1, 1, 1, 1,
      1, 1, 2, 2, 3, 3, 5, 3, 2, 3, 4, 3, 3, 2, 2, 2, 2, 9, 5, 17, 3, 3, 2, 2, 2, 2, 3, 5, 5, 10,
      19, 7, 5, 4, 2, 4, 2, 3, 2, 3, 6, 2, 3, 3, 2, 1, 1, 2, 11, 3, 2, 2, 1, 2, 2, 1, 2, 3, 2, 2,
      2, 2, 1, 1, 2, 28, 2, 2, 2, 1, 2, 1, 1, 1, 2, 1, 1, 2, 1, 1, 2, 1, 1, 1, 1, 1, 1, 1, 2, 2,
      3, 29, 3, 2, 2, 3, 2, 1, 1, 2, 2, 2, 3, 2, 3, 1, 2, 2, 2, 2, 1, 1, 72, 7, 29,
    ];

    const rect = (x, y, w, h, fill) =>
      `<rect x="${x}" y="${y}" width="${w}" height="${h}" fill="${fill}" />`;

    let candleMarkup = "";
    let volumeMarkup = "";
    candles.forEach(([color, high, low, top, bottom], i) => {
      const x = Math.round(FIRST_X + i * STEP);
      candleMarkup += rect(x, high, 1, low - high, color);
      candleMarkup += rect(x - 1, top, 3, Math.max(bottom - top, 1), color);
      volumeMarkup += rect(x - 1, 489 - volumes[i], 3, volumes[i], color);
    });
    document.getElementById("candles").innerHTML = candleMarkup;
    document.getElementById("volumes").innerHTML = volumeMarkup;

    // month separators
    const months = [120, 206, 288, 388, 478, 556, 642, 733, 819, 897, 983, 1070];
    const monthPath = months.map((x) => `M${x + 0.5} 52V582`).join("");
    document.querySelectorAll(".months").forEach((path) => path.setAttribute("d", monthPath));

    // axis ticks: a long one for each label, short ones in between
    function ticks(id, first, gap, perLabel, end) {
      let d = "";
      for (let n = 0; first + (n * gap) / perLabel < end; n++) {
        const y = Math.round(first + (n * gap) / perLabel) + 0.5;
        d += `M0 ${y}h${n % perLabel === 0 ? 6 : 3}`;
      }
      document.getElementById(id).setAttribute("d", d);
    }
    ticks("price-ticks", 79, 31.1, 5, 402);
    ticks("volume-ticks", 421, 34, 5, 490);
    ticks("holding-ticks", 502, 24, 2, 582);
  </script>
</body>
</html>
